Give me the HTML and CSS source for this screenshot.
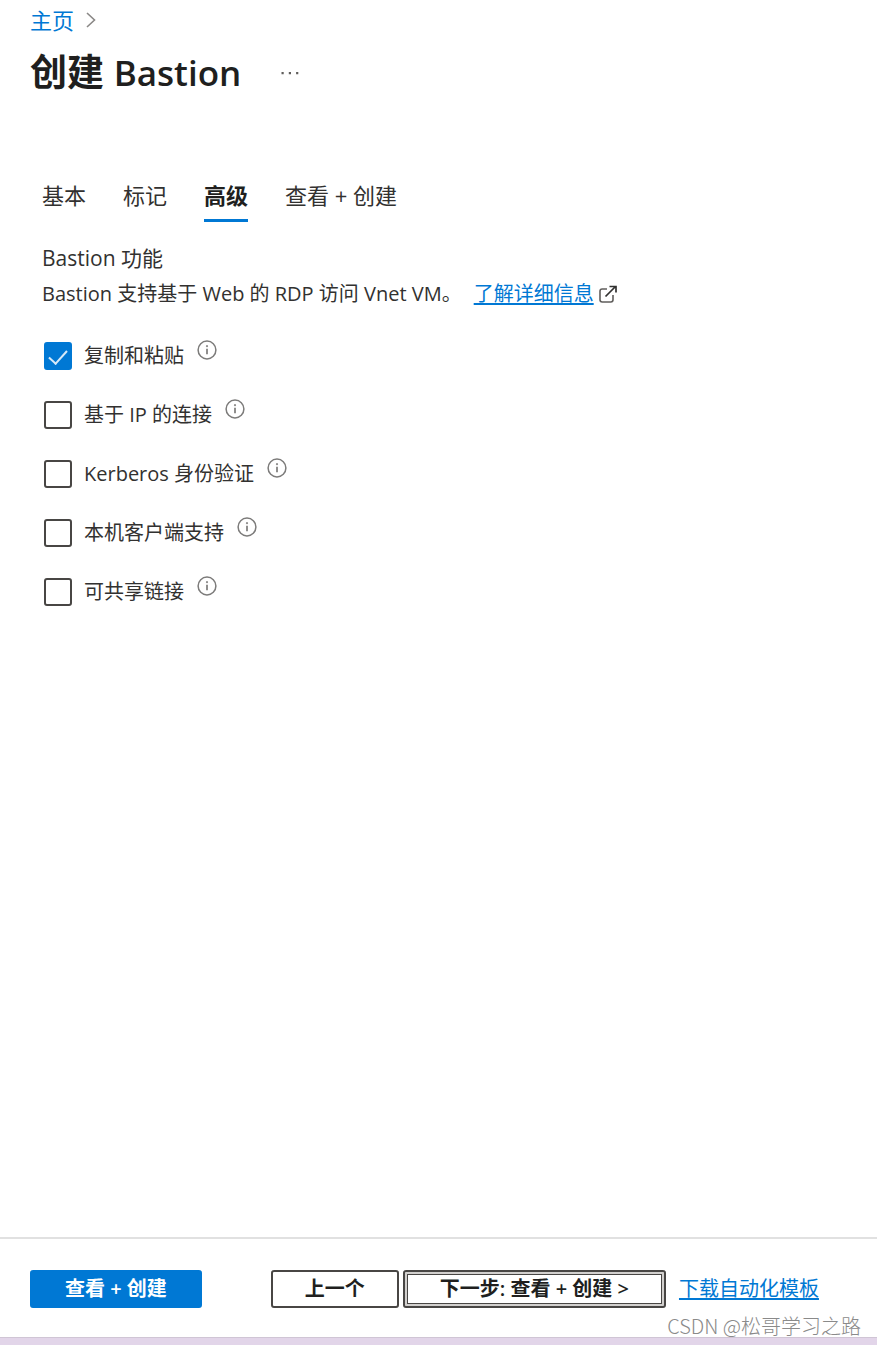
FILE: index.html
```html
<!DOCTYPE html>
<html lang="zh-CN">
<head>
  <meta charset="UTF-8">
  <meta name="viewport" content="width=device-width, initial-scale=1.0">
  <title>创建 Bastion</title>
  <link rel="stylesheet" href="styles.css">
</head>
<body>
  <!-- Shared icons -->
  <svg class="icon-defs" aria-hidden="true">
    <symbol id="icon-info" viewBox="0 0 20 20">
      <circle cx="10" cy="10" r="8.9" fill="none" stroke="#7c7b7a" stroke-width="1.5"/>
      <path d="M10 8.8v5.4" stroke="#8f8e8d" stroke-width="2"/>
      <circle cx="10" cy="6.2" r="1.1" fill="#8f8e8d"/>
    </symbol>
  </svg>

  <header class="page-header">
    <nav class="breadcrumb">
      <a href="#">主页</a>
      <svg class="chevron" width="10" height="16" viewBox="0 0 10 16" aria-hidden="true">
        <path d="M1 1l7.5 7L1 15" fill="none" stroke="#8a8886" stroke-width="1.6"/>
      </svg>
    </nav>
    <div class="title-row">
      <h1>创建 <span class="latin">Bastion</span></h1>
      <button class="more-btn" type="button" aria-label="更多">
        <svg width="18" height="4" viewBox="0 0 18 4" aria-hidden="true">
          <path d="M.5 1h2.2v2.2H.5zM7.8 1H10v2.2H7.8zM15.1 1h2.2v2.2h-2.2z" fill="#605e5c"/>
        </svg>
      </button>
    </div>
  </header>

  <main class="content">
    <div class="tabs" role="tablist">
      <button class="tab" type="button" role="tab" aria-selected="false">基本</button>
      <button class="tab" type="button" role="tab" aria-selected="false">标记</button>
      <button class="tab active" type="button" role="tab" aria-selected="true">高级</button>
      <button class="tab" type="button" role="tab" aria-selected="false">查看 + 创建</button>
    </div>

    <h2>Bastion 功能</h2>
    <p class="description">
      <span>Bastion 支持基于 Web 的 RDP 访问 Vnet VM。</span>
      <a class="learn-more" href="#"><span>了解详细信息</span>
        <svg width="18" height="18" viewBox="0 0 18 18" aria-hidden="true">
          <path d="M8 4H3.2Q1 4 1 6.200v8.600Q1 17 3.200 17h8.600Q14 17 14 14.800V10" fill="none" stroke="#605e5c" stroke-width="1.6"/>
          <path d="M6.500 11.500L16 2M10.500 1.500H17V7.500" fill="none" stroke="#323130" stroke-width="1.7"/>
        </svg>
      </a>
    </p>

    <form class="features" id="featureForm">
      <div class="feature">
        <input type="checkbox" id="copyPaste" checked>
        <label for="copyPaste">复制和粘贴</label>
        <button class="info-btn" type="button" aria-label="复制和粘贴"><svg><use href="#icon-info"/></svg></button>
      </div>
      <div class="feature">
        <input type="checkbox" id="ipConnect">
        <label for="ipConnect">基于 IP 的连接</label>
        <button class="info-btn" type="button" aria-label="基于 IP 的连接"><svg><use href="#icon-info"/></svg></button>
      </div>
      <div class="feature">
        <input type="checkbox" id="kerberos">
        <label for="kerberos">Kerberos 身份验证</label>
        <button class="info-btn" type="button" aria-label="Kerberos 身份验证"><svg><use href="#icon-info"/></svg></button>
      </div>
      <div class="feature">
        <input type="checkbox" id="nativeClient">
        <label for="nativeClient">本机客户端支持</label>
        <button class="info-btn" type="button" aria-label="本机客户端支持"><svg><use href="#icon-info"/></svg></button>
      </div>
      <div class="feature">
        <input type="checkbox" id="shareableLink">
        <label for="shareableLink">可共享链接</label>
        <button class="info-btn" type="button" aria-label="可共享链接"><svg><use href="#icon-info"/></svg></button>
      </div>
    </form>
  </main>

  <footer class="footer">
    <button class="btn btn-primary" type="button">查看 + 创建</button>
    <button class="btn" type="button">上一个</button>
    <button class="btn btn-next" type="button">下一步: 查看 + 创建 &gt;</button>
    <a href="#">下载自动化模板</a>
    <span class="watermark">CSDN @松哥学习之路</span>
  </footer>
</body>
</html>
```
FILE: styles.css
```css
* {
  margin: 0;
  padding: 0;
  box-sizing: border-box;
}

body {
  display: flex;
  flex-direction: column;
  min-height: 100vh;
  background-color: #fff;
  color: #323130;
  font-family: "Open Sans", "Noto Sans CJK SC", sans-serif;
  font-size: 20px;
  line-height: 28px;
}

button {
  border: none;
  background: none;
  color: inherit;
  font: inherit;
  cursor: pointer;
}

a {
  color: #0078d4;
  text-underline-offset: 2px;
}

.icon-defs {
  position: absolute;
  width: 0;
  height: 0;
}

/* Header */
.page-header {
  padding: 6px 30px 0;
}

.breadcrumb {
  display: flex;
  align-items: center;
  gap: 12px;
  font-size: 22px;
}

.breadcrumb a {
  text-decoration: none;
}

.title-row {
  display: flex;
  align-items: center;
  gap: 40px;
  margin-top: 14px;
}

h1 {
  color: #201f1e;
  font-size: 37px;
  font-weight: 600;
  line-height: 48px;
}

h1 .latin {
  font-size: 35px;
}

.more-btn {
  display: flex;
}

/* Tabs and form */
.content {
  flex: 1;
  padding: 84px 42px 0;
}

.tabs {
  display: flex;
  gap: 37px;
}

.tab {
  padding-bottom: 10px;
  border-bottom: 3px solid transparent;
  font-size: 22px;
}

.tab.active {
  border-color: #0078d4;
  color: #201f1e;
  font-weight: 600;
}

h2 {
  margin-top: 22px;
  font-size: 21px;
  font-weight: 400;
}

.description {
  display: flex;
  gap: 12px;
  margin-top: 8px;
}

.learn-more {
  display: flex;
  align-items: center;
  gap: 5px;
  text-decoration: none;
}

.learn-more span {
  text-decoration: underline;
}

.features {
  display: flex;
  flex-direction: column;
  gap: 27px;
  margin-top: 32px;
}

.feature {
  display: flex;
  align-items: center;
}

.feature input {
  appearance: none;
  width: 28px;
  height: 28px;
  margin: 0 12px 0 2px;
  border: 2px solid #484644;
  border-radius: 3px;
}

.feature input:checked {
  display: grid;
  place-items: center;
  border-color: #0078d4;
  background-color: #0078d4;
}

.feature input:checked::before {
  content: "";
  width: 16px;
  height: 8px;
  border: solid #d6e9f8;
  border-width: 0 0 2px 2px;
  transform: rotate(-48deg);
  margin-bottom: 3px;
}

.info-btn {
  display: flex;
  align-items: center;
  margin-left: 13px;
  padding-bottom: 12px;
}

.info-btn svg {
  width: 20px;
  height: 20px;
}

/* Footer */
.footer {
  position: relative;
  display: flex;
  align-items: center;
  padding: 31px 30px 30px;
  border-top: 2px solid #e1e1e1;
  border-bottom: 7px solid #e2d5e9;
  box-shadow: inset 0 -1px #d0c5d5;
}

.btn {
  height: 38px;
  padding: 0 32px;
  border: 2px solid #484644;
  border-radius: 3px;
  color: #201f1e;
  font-weight: 600;
  line-height: 32px;
}

.btn-primary {
  margin-right: 69px;
  padding: 0 33px;
  border-color: #0078d4;
  background-color: #0078d4;
  color: #fff;
}

.btn-next {
  margin: 0 13px 0 4px;
  padding: 0 35px;
  outline: 1px solid #484644;
  outline-offset: -5px;
  box-shadow: inset 0 0 0 2px #d2d0ce;
}

.watermark {
  position: absolute;
  right: 16px;
  bottom: -2px;
  color: #8a8a8a;
  font-family: "Noto Sans CJK SC", sans-serif;
  font-weight: 300;
}
```
